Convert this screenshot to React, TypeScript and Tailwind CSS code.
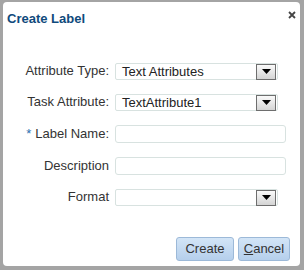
import React from "react";

const font = { fontFamily: '"Liberation Sans", Arial, sans-serif' };

function DropButton() {
  return (
    <div className="absolute right-[1px] top-[0px] flex h-[16px] w-[20px] items-center justify-center border border-[#6e6e6e] bg-gradient-to-b from-[#fafafa] to-[#d4d4d4]">
      <svg width="9" height="5" viewBox="0 0 9 5">
        <polygon points="0,0 9,0 4.5,5" fill="#000" />
      </svg>
    </div>
  );
}

function Select({ value }: { value?: string }) {
  return (
    <div className="relative h-[17px] w-[163px] rounded-[2px] border border-[#d8e2e0] bg-white">
      <span className="absolute left-[6px] top-[0px] text-[13px] leading-[16px] text-[#222]">{value}</span>
      <DropButton />
    </div>
  );
}

function Input() {
  return <div className="h-[18px] w-[171px] rounded-[3px] border border-[#d8e2e0] bg-white" />;
}

function Row({ label, children, cls, req }: { label: string; children: React.ReactNode; cls: string; req?: boolean }) {
  return (
    <div className={`flex h-[18px] items-center ${cls}`}>
      <div className="w-[107px] pr-[1px] text-right text-[13px] leading-[16px] text-[#333]">
        {req && <span className="mr-[4px] text-[#2a6fb0]">*</span>}
        {label}
      </div>
      <div className="ml-[5px]">{children}</div>
    </div>
  );
}

export default function App() {
  return (
    <div className="h-[270px] w-[304px] bg-[#a4a4a4] pl-[3px] pt-[2px]" style={font}>
      <div className="relative flex h-[264px] w-[297px] flex-col rounded-[4px] bg-white">
        <div className="pl-[4px] pt-[9px] text-[13px] font-bold leading-[16px] text-[#0f4a7c]">Create Label</div>
        <svg className="absolute left-[285px] top-[9px]" width="8" height="8" viewBox="0 0 8 8">
          <path d="M1 1 L7 7 M7 1 L1 7" stroke="#444" strokeWidth="1.8" />
        </svg>
        <Row label="Attribute Type:" cls="mt-[35px]">
          <Select value="Text Attributes" />
        </Row>
        <Row label="Task Attribute:" cls="mt-[13px]">
          <Select value="TextAttribute1" />
        </Row>
        <Row label="Label Name:" cls="mt-[14px]" req>
          <Input />
        </Row>
        <Row label="Description" cls="mt-[14px]">
          <Input />
        </Row>
        <Row label="Format" cls="mt-[13px]">
          <Select />
        </Row>
        <div className="mt-[31px] flex justify-end gap-[4px] pr-[10px]">
          <button className="h-[24px] w-[58px] rounded-[3px] border border-[#9cb9d8] bg-gradient-to-b from-[#d3e5f7] to-[#b5cfec] text-[13px] text-[#333]">
            Create
          </button>
          <button className="h-[24px] w-[52px] rounded-[3px] border border-[#9cb9d8] bg-gradient-to-b from-[#d3e5f7] to-[#b5cfec] text-[13px] text-[#333]">
            <span className="underline">C</span>ancel
          </button>
        </div>
      </div>
    </div>
  );
}
